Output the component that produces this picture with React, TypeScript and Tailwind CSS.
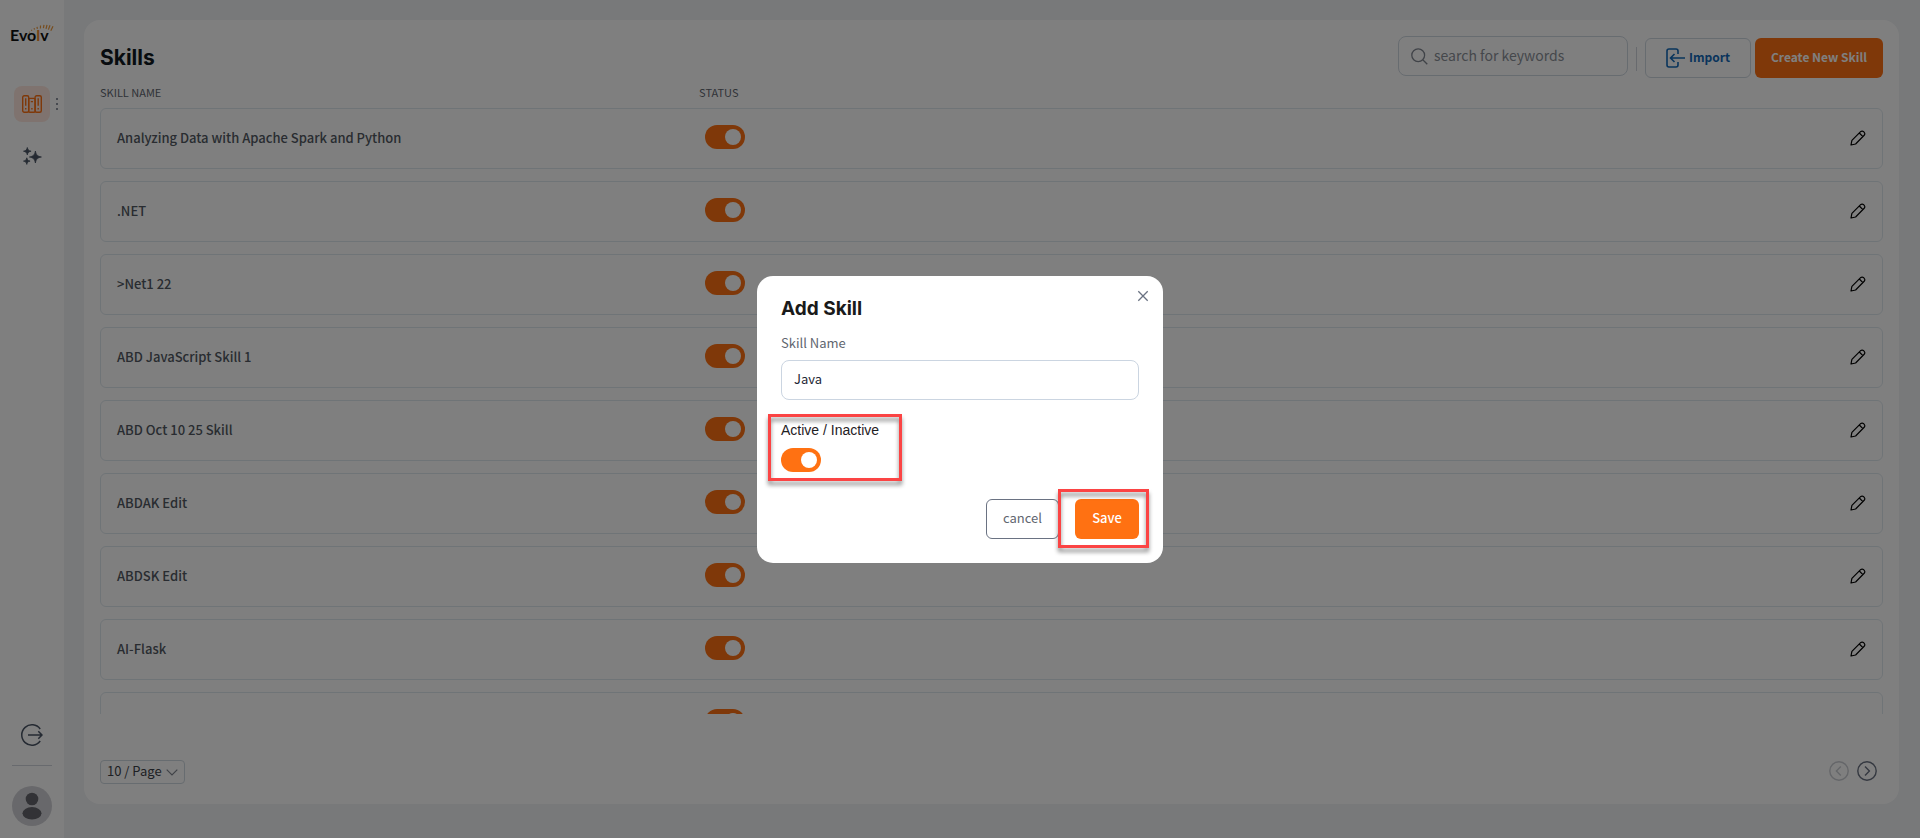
import { useState } from "react";

const skills = [
  "Analyzing Data with Apache Spark and Python",
  ".NET",
  ">Net1 22",
  "ABD JavaScript Skill 1",
  "ABD Oct 10 25 Skill",
  "ABDAK Edit",
  "ABDSK Edit",
  "AI-Flask",
  "",
];

function App() {
  return (
    <div className="flex h-screen bg-[#f0f2f5] font-['Noto_Sans_CJK_SC',sans-serif] text-[#5f6670]">
      <Sidebar />
      <main className="min-w-0 flex-1 pt-5 pr-[21px] pb-[34px] pl-5">
        <section className="flex h-full flex-col rounded-2xl bg-white px-4 pt-4">
          <Header />
          <SkillsTable />
          <Pagination />
        </section>
      </main>
      <AddSkillDialog />
    </div>
  );
}

function Sidebar() {
  return (
    <aside className="flex w-16 shrink-0 flex-col items-center bg-white pb-3">
      <Logo />
      <nav className="mt-10 flex w-full flex-col items-center gap-4">
        <div className="relative">
          <a
            href="#skills"
            aria-label="Skills"
            className="flex size-9 items-center justify-center rounded-lg bg-[#ffe7de] text-[#ff7112]"
          >
            <BooksIcon />
          </a>
          <button
            aria-label="More"
            className="absolute top-3 -right-2 flex w-0.5 flex-col gap-[3px] *:size-0.5 *:rounded-full *:bg-gray-500"
          >
            <span />
            <span />
            <span />
          </button>
        </div>
        <a
          href="#assistant"
          aria-label="Assistant"
          className="flex size-9 items-center justify-center text-gray-600"
        >
          <SparklesIcon />
        </a>
      </nav>

      <button aria-label="Log out" className="mt-auto text-gray-600">
        <LogoutIcon />
      </button>
      <hr className="mt-[19px] w-10 border-gray-300" />
      <button aria-label="Profile" className="mt-5">
        <svg width="40" height="40" viewBox="0 0 40 40">
          <circle cx="20" cy="20" r="20" fill="#d1d1d6" />
          <circle cx="20" cy="13" r="6.3" fill="#64656c" />
          <ellipse cx="20" cy="27.3" rx="9.5" ry="6.2" fill="#64656c" />
        </svg>
      </button>
    </aside>
  );
}

function Logo() {
  return (
    <div className="relative mt-6 h-[22px] w-11">
      <p className="font-[Lato,sans-serif] text-base leading-[22px] font-bold text-[#111111]">
        Evo<span className="text-[#ef8a2c]">l</span>v
      </p>
      <svg
        width="26"
        height="9"
        viewBox="0 0 26 9"
        className="absolute top-0 right-0"
        stroke="#ef9a3c"
        strokeWidth="1.2"
        fill="none"
      >
        <path d="M1 8l.7.3M3.2 5.8l.8.8M6 4.2l.6 1.4M9 2.8l.4 2M12.5 1.5l-.1 3M16 .8l-.6 3.4M19 .8l-1 4M22 1.2l-1.6 4.4M25 2.2l-2.2 4.6" />
      </svg>
    </div>
  );
}

function Header() {
  return (
    <header className="flex h-[42px] items-start justify-between">
      <h1 className="pt-1 font-[Inter,sans-serif] text-[21px] leading-9 font-bold text-[#101820]">
        Skills
      </h1>
      <div className="flex items-start">
        <label className="flex h-10 w-[230px] items-center gap-1.5 rounded-lg border border-[#cfd8e0] pl-3 text-gray-400">
          <svg
            width="17"
            height="17"
            viewBox="0 0 17 17"
            fill="none"
            stroke="#808690"
            strokeWidth="1.3"
          >
            <circle cx="7.2" cy="7.2" r="6.4" />
            <path d="M12 12l4.3 4.3" />
          </svg>
          <input
            type="search"
            aria-label="Search skills"
            placeholder="search for keywords"
            className="min-w-0 flex-1 pb-0.5 text-sm outline-none placeholder:text-[#8b9098]"
          />
        </label>
        <span className="mx-2 mt-[11px] h-6 w-px bg-gray-300" />
        <button className="mt-0.5 flex h-10 w-[106px] items-center justify-center gap-1 rounded-md border border-[#cfd8e0] text-xs font-bold text-[#1269b8]">
          <svg
            width="19"
            height="20"
            viewBox="0 0 19 20"
            fill="none"
            stroke="currentColor"
            strokeWidth="1.6"
          >
            <path d="M12 6V3a2 2 0 0 0-2-2H3a2 2 0 0 0-2 2v14a2 2 0 0 0 2 2h7a2 2 0 0 0 2-2v-3" />
            <path d="M19 10H5M8.5 6L4.5 10l4 4" />
          </svg>
          <span className="pb-0.5">Import</span>
        </button>
        <button className="mt-0.5 ml-1 h-10 w-32 rounded-md bg-[#ff7112] pb-0.5 text-xs font-bold text-white">
          Create New Skill
        </button>
      </div>
    </header>
  );
}

function SkillsTable() {
  return (
    <table className="flex min-h-0 flex-1 flex-col text-left">
      <thead className="block">
        <tr className="flex h-[30px] items-center pb-0.5 text-[11px] *:font-normal">
          <th className="w-[33.6%]">SKILL NAME</th>
          <th>STATUS</th>
        </tr>
      </thead>
      <tbody className="flex min-h-0 flex-1 flex-col gap-3 overflow-y-auto [scrollbar-width:none]">
        {skills.map((name) => (
          <SkillRow key={name} name={name} />
        ))}
      </tbody>
    </table>
  );
}

function SkillRow({ name }: { name: string }) {
  return (
    <tr className="flex h-[61px] shrink-0 items-center rounded-md border border-[#dfe8ee]">
      <td className="w-[33.6%] pb-0.5 pl-4 text-[13px] font-medium text-[#525962]">
        {name}
      </td>
      <td className="pb-[3px] pl-1.5">
        <Toggle label={`${name} status`} />
      </td>
      <td className="mr-4 ml-auto pb-px">
        <button aria-label={`Edit ${name}`} className="block text-black">
          <PencilIcon />
        </button>
      </td>
    </tr>
  );
}

function Toggle({ label, id }: { label?: string; id?: string }) {
  return (
    <input
      type="checkbox"
      role="switch"
      id={id}
      aria-label={label}
      defaultChecked
      className="block h-6 w-10 cursor-pointer appearance-none rounded-full bg-gray-300 p-1 before:block before:size-4 before:rounded-full before:bg-white checked:bg-[#ff7112] checked:before:ml-4"
    />
  );
}

function Pagination() {
  return (
    <footer className="flex items-start justify-between pt-[46px] pr-1.5 pb-5">
      <div className="relative">
        <select
          aria-label="Rows per page"
          className="block h-6 w-[85px] appearance-none rounded border border-[#cfd8e0] pb-0.5 pl-1.5 text-[13px] leading-5 text-[#3c4148]"
        >
          <option>10 / Page</option>
        </select>
        <svg
          width="12"
          height="7"
          viewBox="0 0 12 7"
          fill="none"
          stroke="#808690"
          strokeWidth="1.2"
          className="pointer-events-none absolute top-[9px] right-[7px]"
        >
          <path d="M.7.7L6 6 11.3.7" />
        </svg>
      </div>
      <div className="flex gap-2 pt-px text-gray-500">
        <button aria-label="Previous page" disabled className="opacity-35">
          <CircleArrow d="M11.8 5.5L7.4 10l4.4 4.5" />
        </button>
        <button aria-label="Next page">
          <CircleArrow d="M8 5.5l4.4 4.5L8 14.5" />
        </button>
      </div>
    </footer>
  );
}

function AddSkillDialog() {
  const [skillName, setSkillName] = useState("Java");

  return (
    <div className="fixed inset-0 z-10 flex items-center justify-center bg-black/50">
      <div
        role="dialog"
        aria-modal="true"
        aria-labelledby="dialog-title"
        className="relative w-[406px] rounded-2xl bg-white p-6"
      >
        <button
          aria-label="Close"
          className="absolute top-3.5 right-3.5 text-gray-500"
        >
          <svg
            width="12"
            height="12"
            viewBox="0 0 12 12"
            stroke="currentColor"
            strokeWidth="1.3"
          >
            <path d="M1.3 1.3l9.4 9.4M10.7 1.3l-9.4 9.4" />
          </svg>
        </button>
        <h2
          id="dialog-title"
          className="font-[Inter,sans-serif] text-[19px] leading-[18px] font-bold text-[#1a1a1a]"
        >
          Add Skill
        </h2>
        <label
          htmlFor="skill-name"
          className="mt-[15px] block text-[13px] leading-5"
        >
          Skill Name
        </label>
        <input
          id="skill-name"
          value={skillName}
          onChange={(e) => setSkillName(e.target.value)}
          className="mt-[7px] block h-10 w-full rounded-lg border border-[#cbd5e1] px-3 pb-0.5 text-[13px] text-[#1f2937] outline-none"
        />

        <div className="relative mt-5 w-fit">
          <label
            htmlFor="skill-active"
            className="block font-['Liberation_Sans',sans-serif] text-sm leading-5 text-[#1f2124]"
          >
            Active / Inactive
          </label>
          <div className="mt-2">
            <Toggle id="skill-active" />
          </div>
          <Highlight className="-top-1.5 -right-[23px] -bottom-[9px] -left-[13px]" />
        </div>

        <div className="mt-[27px] flex justify-end gap-4">
          <button className="h-10 w-[73px] rounded-md border border-gray-500 pb-0.5 text-[13px]">
            cancel
          </button>
          <div className="relative">
            <button className="h-10 w-16 rounded-md bg-[#ff7112] pb-0.5 text-[13px] font-medium text-white">
              Save
            </button>
            <Highlight className="-top-2.5 -right-2.5 -bottom-[9px] -left-[17px]" />
          </div>
        </div>
      </div>
    </div>
  );
}

function Highlight({ className }: { className: string }) {
  return (
    <span
      className={`pointer-events-none absolute border-[3px] border-[#fb4444] drop-shadow-[0_4px_2px_rgba(0,0,0,0.45)] ${className}`}
    />
  );
}

function CircleArrow({ d }: { d: string }) {
  return (
    <svg
      width="20"
      height="20"
      viewBox="0 0 20 20"
      fill="none"
      stroke="currentColor"
      strokeWidth="1.4"
      className="block"
    >
      <circle cx="10" cy="10" r="9.2" />
      <path d={d} />
    </svg>
  );
}

function PencilIcon() {
  return (
    <svg
      width="16"
      height="16"
      viewBox="0 0 16 16"
      fill="none"
      stroke="currentColor"
      strokeWidth="1.2"
      strokeLinejoin="round"
    >
      <path d="M1 15l.9-4.6L10.6 1.7a2.1 2.1 0 0 1 3 0l.6.6a2.1 2.1 0 0 1 0 3L5.6 14 1 15zM9.3 3l3.6 3.6" />
    </svg>
  );
}

function BooksIcon() {
  return (
    <svg
      width="20"
      height="18"
      viewBox="0 0 20 18"
      fill="none"
      stroke="currentColor"
      strokeWidth="1.4"
    >
      <rect x=".7" y=".7" width="6" height="16.6" rx="1.5" />
      <rect x="6.7" y="3.4" width="6.4" height="13.9" rx="1" />
      <rect x="13.1" y=".7" width="6.2" height="16.6" rx="1.5" />
      <path d="M3.7 3.2v7.6M3.7 13v1.6M16.2 3.2v7.6M16.2 13v1.6M8.8 6.6h2.2M9.9 13v1.6" />
    </svg>
  );
}

function SparklesIcon() {
  return (
    <svg
      width="19"
      height="18"
      viewBox="0 0 19 18"
      fill="currentColor"
      stroke="currentColor"
      strokeWidth=".8"
      strokeLinejoin="round"
    >
      <path d="M12.4 4c.8 3.9 1.9 5.2 6 6-4.1.8-5.2 2.1-6 6-.8-3.9-1.9-5.2-6-6 4.1-.8 5.2-2.1 6-6z" />
      <path d="M4.3.5c.5 2.4 1.3 3.2 3.8 3.7-2.5.5-3.3 1.3-3.8 3.7C3.8 5.5 3 4.7.5 4.2 3 3.7 3.8 2.9 4.3.5z" />
      <path d="M3.8 10.8c.4 2.2 1.1 2.8 3.3 3.3-2.2.5-2.9 1.1-3.3 3.3-.4-2.2-1.1-2.8-3.3-3.3 2.2-.5 2.9-1.1 3.3-3.3z" />
    </svg>
  );
}

function LogoutIcon() {
  return (
    <svg
      width="22"
      height="22"
      viewBox="0 0 22 22"
      fill="none"
      stroke="currentColor"
      strokeWidth="1.5"
      className="block"
    >
      <path d="M19.2 5A10.2 10.2 0 1 0 19.2 17M7 11h14M17.3 7.2L21 11l-3.7 3.8" />
    </svg>
  );
}

export default App;
